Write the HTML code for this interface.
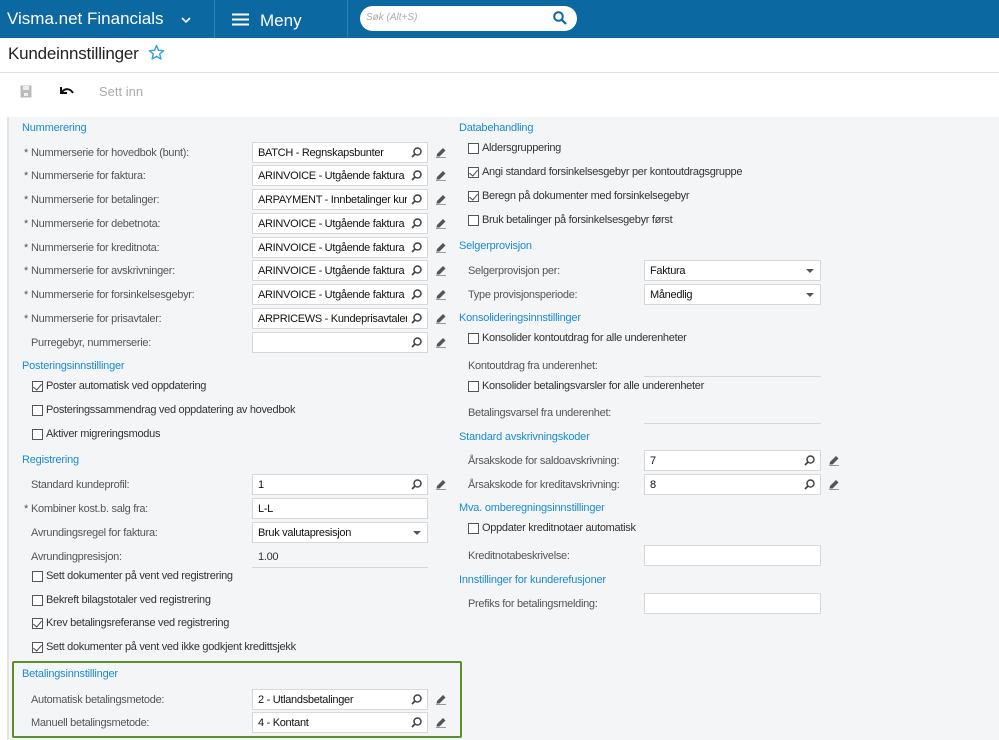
<!DOCTYPE html>
<html><head><meta charset="utf-8"><style>
*{box-sizing:border-box;margin:0;padding:0}
body{width:999px;height:740px;overflow:hidden;background:#fff;font-family:"Liberation Sans",Arial,sans-serif;position:relative}
.a{position:absolute;white-space:nowrap}
.hdr{left:0;top:0;width:999px;height:38px;background:#0b68a0}
.sep{top:0;width:1px;height:38px;background:#2f82b4}
.content{left:7px;top:117px;width:992px;height:623px;background:#f4f5f7;border-left:2px solid #e2e4e8}
.h{font-size:11px;color:#1a8ad4;letter-spacing:-0.2px}
.l{font-size:11px;color:#555;letter-spacing:-0.3px}
.st{font-size:11px;color:#333;letter-spacing:-0.3px}
.in{height:21px;background:#fff;border:1px solid #d6d8dc;font-size:11px;letter-spacing:-0.3px;color:#111;padding:4px 0 0 5px;overflow:hidden}
.in svg{background:#fff}
.cb{width:11px;height:11px;border:1px solid #555;background:#fff}
.ck::after{content:"";position:absolute;left:2px;top:0px;width:4px;height:7px;border:solid #444;border-width:0 1.5px 1.5px 0;transform:rotate(40deg)}
.line{height:1px;background:#d6d8dc}
</style></head><body>
<div class="a hdr"></div>
<div class="a" style="left:7px;top:9px;font-size:17px;color:#fff">Visma.net Financials</div>
<svg class="a" style="left:181px;top:16px" width="10" height="8"><path d="M1 2 L5 6 L9 2" stroke="#fff" stroke-width="1.6" fill="none"/></svg>
<div class="a sep" style="left:214px"></div>
<div class="a sep" style="left:347px"></div>
<svg class="a" style="left:232px;top:13px" width="17" height="13"><path d="M0 1.5H17M0 6.5H17M0 11.5H17" stroke="#fff" stroke-width="2"/></svg>
<div class="a" style="left:260px;top:11px;font-size:17px;color:#fff">Meny</div>
<div class="a" style="left:360px;top:6px;width:217px;height:25px;background:#fff;border-radius:13px"></div>
<div class="a" style="left:366px;top:12px;font-size:10px;color:#aaa;font-style:italic">Søk (Alt+S)</div>
<svg class="a" style="left:553px;top:11px" width="14" height="14"><circle cx="5.5" cy="5.5" r="4.3" stroke="#0b68a0" stroke-width="2" fill="none"/><path d="M8.7 8.7L13 13" stroke="#0b68a0" stroke-width="2.2"/></svg>
<div class="a" style="left:8px;top:44px;font-size:17px;color:#222;letter-spacing:-0.2px">Kundeinnstillinger</div>
<svg class="a" style="left:148px;top:44px" width="17" height="17"><path d="M8.5 1.5L10.5 6.3 15.6 6.7 11.7 10 12.9 15 8.5 12.3 4.1 15 5.3 10 1.4 6.7 6.5 6.3Z" fill="none" stroke="#3a9be0" stroke-width="1.4" stroke-linejoin="round"/></svg>
<div class="a" style="left:0;top:72px;width:999px;height:1px;background:#e0e0e0"></div>
<svg class="a" style="left:20px;top:85px" width="12" height="13"><rect x="0.5" y="0.5" width="11" height="12" fill="#bbb"/><rect x="3" y="1" width="6" height="4" fill="#eee"/><rect x="4" y="8" width="4" height="3" fill="#eee"/></svg>
<svg class="a" style="left:59px;top:86px" width="16" height="10"><path d="M2 1V7H8" fill="none" stroke="#111" stroke-width="2"/><path d="M2.5 6.5C6 2 11 2 14 7" fill="none" stroke="#111" stroke-width="2"/></svg>
<div class="a" style="left:99px;top:84px;font-size:13px;color:#aaa">Sett inn</div>
<div class="a content"></div>
<div id="f"></div>
<div class="a" style="left:12px;top:661px;width:450px;height:77px;border:2px solid #5b8f2b;border-radius:2px"></div>
<script>
var o='';
function t(x,y,s,c){o+='<div class="a '+c+'" style="left:'+x+'px;top:'+(y-5)+'px">'+s+'</div>';}
var srch='<svg class="a" style="right:1px;top:2px;padding:2px 4px 2px 4px;box-sizing:content-box" width="11" height="11"><circle cx="6.5" cy="4.5" r="3.5" stroke="#444" stroke-width="1.5" fill="none"/><path d="M4 7L1 10" stroke="#444" stroke-width="1.8"/></svg>';
function pen(x,y){o+='<svg class="a" style="left:'+x+'px;top:'+(y-6)+'px" width="12" height="12"><path d="M2 8L8 2 10.5 4.5 4.5 10.5 1.5 10.5Z" fill="#555"/><path d="M1 11.5H11" stroke="#999" stroke-width="1"/></svg>';}
function inp(x,y,w,v,kind){o+='<div class="a in" style="left:'+x+'px;top:'+(y-10)+'px;width:'+w+'px">'+v+(kind=='s'?srch:'')+(kind=='d'?'<svg class="a" style="right:6px;top:8px" width="8" height="5"><path d="M0 0H8L4 4Z" fill="#555"/></svg>':'')+'</div>';}
function cb(x,y,s,c){o+='<div class="a cb'+(c?' ck':'')+'" style="left:'+x+'px;top:'+(y-5)+'px"></div>';t(x+14,y-1,s,'st');}
t(22,127,'Nummerering','h');
var rows=[['Nummerserie for hovedbok (bunt):','BATCH - Regnskapsbunter'],['Nummerserie for faktura:','ARINVOICE - Utgående faktura'],['Nummerserie for betalinger:','ARPAYMENT - Innbetalinger kur'],['Nummerserie for debetnota:','ARINVOICE - Utgående faktura'],['Nummerserie for kreditnota:','ARINVOICE - Utgående faktura'],['Nummerserie for avskrivninger:','ARINVOICE - Utgående faktura'],['Nummerserie for forsinkelsesgebyr:','ARINVOICE - Utgående faktura'],['Nummerserie for prisavtaler:','ARPRICEWS - Kundeprisavtaler']];
var ys=[152,175,199,223,247,270,294,318];
for(var i=0;i<8;i++){t(24,ys[i],'*','l');t(31,ys[i],rows[i][0],'l');inp(252,ys[i],176,rows[i][1],'s');pen(435,ys[i]);}
t(31,342,'Purregebyr, nummerserie:','l');inp(252,342,176,'','s');pen(435,342);
t(22,365,'Posteringsinnstillinger','h');
cb(32,386,'Poster automatisk ved oppdatering',1);cb(32,410,'Posteringssammendrag ved oppdatering av hovedbok',0);cb(32,434,'Aktiver migreringsmodus',0);
t(22,459,'Registrering','h');
t(31,484,'Standard kundeprofil:','l');inp(252,484,176,'1','s');pen(435,484);
t(24,508,'*','l');t(31,508,'Kombiner kost.b. salg fra:','l');inp(252,508,176,'L-L','');
t(31,532,'Avrundingsregel for faktura:','l');inp(252,532,176,'Bruk valutapresisjon','d');
t(31,556,'Avrundingpresisjon:','l');t(258,556,'1.00','st');o+='<div class="a line" style="left:252px;top:567px;width:176px"></div>';
cb(32,576,'Sett dokumenter på vent ved registrering',0);cb(32,600,'Bekreft bilagstotaler ved registrering',0);cb(32,623,'Krev betalingsreferanse ved registrering',1);cb(32,647,'Sett dokumenter på vent ved ikke godkjent kredittsjekk',1);
t(22,673,'Betalingsinnstillinger','h');
t(31,699,'Automatisk betalingsmetode:','l');inp(252,699,176,'2 - Utlandsbetalinger','s');pen(435,699);
t(31,722,'Manuell betalingsmetode:','l');inp(252,722,176,'4 - Kontant','s');pen(435,722);
t(459,127,'Databehandling','h');
cb(468,148,'Aldersgruppering',0);cb(468,172,'Angi standard forsinkelsesgebyr per kontoutdragsgruppe',1);cb(468,196,'Beregn på dokumenter med forsinkelsegebyr',1);cb(468,220,'Bruk betalinger på forsinkelsesgebyr først',0);
t(459,245,'Selgerprovisjon','h');
t(468,270,'Selgerprovisjon per:','l');inp(644,270,177,'Faktura','d');
t(468,294,'Type provisjonsperiode:','l');inp(644,294,177,'Månedlig','d');
t(459,317,'Konsolideringsinnstillinger','h');
cb(468,338,'Konsolider kontoutdrag for alle underenheter',0);
t(468,365,'Kontoutdrag fra underenhet:','l');o+='<div class="a line" style="left:644px;top:376px;width:177px"></div>';
cb(468,386,'Konsolider betalingsvarsler for alle underenheter',0);
t(468,412,'Betalingsvarsel fra underenhet:','l');o+='<div class="a line" style="left:644px;top:423px;width:177px"></div>';
t(459,436,'Standard avskrivningskoder','h');
t(468,460,'Årsakskode for saldoavskrivning:','l');inp(644,460,177,'7','s');pen(828,460);
t(468,484,'Årsakskode for kreditavskrivning:','l');inp(644,484,177,'8','s');pen(828,484);
t(459,507,'Mva. omberegningsinnstillinger','h');
cb(468,528,'Oppdater kreditnotaer automatisk',0);
t(468,555,'Kreditnotabeskrivelse:','l');inp(644,555,177,'','');
t(459,579,'Innstillinger for kunderefusjoner','h');
t(468,603,'Prefiks for betalingsmelding:','l');inp(644,603,177,'','');
document.getElementById('f').innerHTML=o;
</script>
</body></html>
